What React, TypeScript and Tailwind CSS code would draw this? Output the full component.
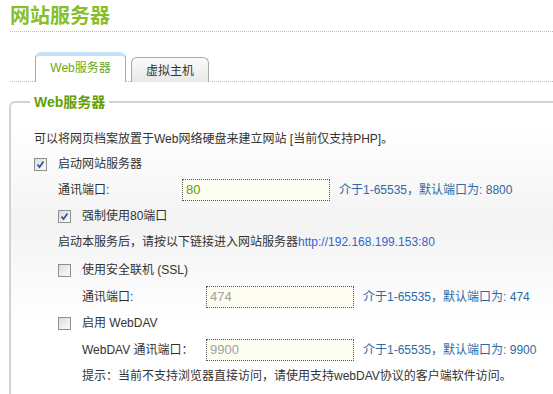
import React from "react";

const font = "font-['Liberation_Sans','Noto_Sans_CJK_SC',sans-serif]";

function Check({ checked }: { checked?: boolean }) {
  return (
    <span className="flex h-[13px] w-[13px] shrink-0 items-center justify-center border border-[#8e8f8f] bg-[linear-gradient(135deg,#dcdcd6,#fbfbfb)]">
      {checked && (
        <svg width="9" height="9" viewBox="0 0 9 9" aria-hidden="true">
          <path d="M1.5 4.5L3.5 7L7.5 1.5" fill="none" stroke="#2f4fa8" strokeWidth="1.7" />
        </svg>
      )}
    </span>
  );
}

function PortRow({
  label,
  value,
  hint,
  active,
  indent,
  h,
}: {
  label: string;
  value: string;
  hint: string;
  active?: boolean;
  indent: string;
  h: string;
}) {
  return (
    <div className={`flex items-center ${indent} ${h}`}>
      <span className="w-[124px] shrink-0">{label}</span>
      <div
        className={`flex h-[22px] w-[148px] items-center border border-dotted border-[#555] bg-[#fdfdf2] pl-[3px] text-[13px] ${
          active ? "text-[#5b9f00]" : "text-[#a0a0a0]"
        }`}
      >
        {value}
      </div>
      <span className="ml-[9px] text-[#2d6aa5]">{hint}</span>
    </div>
  );
}

export default function App() {
  return (
    <div className={`h-[394px] w-[553px] overflow-hidden bg-white text-[12px] text-[#333] ${font}`}>
      {/* page title */}
      <div className="ml-[10px] h-[32px] border-b border-dotted border-[#bdbdbd] pt-[4px]">
        <h1 className="text-[20px] font-bold leading-[24px] text-[#86bf2b]">网站服务器</h1>
      </div>

      {/* tabs */}
      <div className="ml-[10px] mt-[20px] flex h-[30px] items-end border-b border-dotted border-[#bdbdbd] pl-[25px]">
        <div className="relative -mb-px flex h-[30px] w-[91px] items-center justify-center rounded-t-[6px] border border-b-0 border-[#a9a9a9] border-t-[4px] border-t-[#c4e2f8] bg-white pb-[2px] text-[#6aa81a]">
          Web服务器
        </div>
        <div className="relative -mb-px ml-[5px] flex h-[25px] w-[78px] items-center justify-center rounded-t-[6px] border border-b-0 border-[#a9a9a9] bg-[linear-gradient(#fbfbfb,#e8e8e8)] pt-[2px] text-[#333]">
          虚拟主机
        </div>
      </div>

      {/* settings group */}
      <fieldset className="ml-[9px] mt-[12px] rounded-tl-[6px] border-l-2 border-t-2 border-[#d2d2d2] bg-[linear-gradient(to_bottom,#fff_8%,#f3f3f3_40%,#fff_72%)] pl-[19px] pb-[20px] pt-[16px]">
        <legend className="px-[4px] text-[14px] font-bold leading-[16px] text-[#5fa006]">Web服务器</legend>

        <div className="pl-[4px]">
          <div className="flex h-[26px] items-center">
            可以将网页档案放置于Web网络硬盘来建立网站 [当前仅支持PHP]。
          </div>
          <div className="flex h-[24px] items-center gap-[11px]">
            <Check checked />
            <span>启动网站服务器</span>
          </div>
          <PortRow label="通讯端口:" value="80" hint="介于1-65535，默认端口为: 8800" active indent="pl-[24px]" h="h-[28px]" />
          <div className="flex h-[24px] items-center gap-[11px] pl-[24px]">
            <Check checked />
            <span>强制使用80端口</span>
          </div>
          <div className="flex h-[28px] items-center pl-[24px]">
            启动本服务后，请按以下链接进入网站服务器
            <span className="text-[#3366cc]">http://192.168.199.153:80</span>
          </div>
          <div className="flex h-[28px] items-center gap-[11px] pl-[24px]">
            <Check />
            <span>使用安全联机 (SSL)</span>
          </div>
          <PortRow label="通讯端口:" value="474" hint="介于1-65535，默认端口为: 474" indent="pl-[48px]" h="h-[26px]" />
          <div className="flex h-[26px] items-center gap-[11px] pl-[24px]">
            <Check />
            <span>启用 WebDAV</span>
          </div>
          <PortRow label="WebDAV 通讯端口：" value="9900" hint="介于1-65535，默认端口为: 9900" indent="pl-[48px]" h="h-[28px]" />
          <div className="flex h-[24px] items-center pl-[48px]">
            提示：当前不支持浏览器直接访问，请使用支持webDAV协议的客户端软件访问。
          </div>
        </div>
      </fieldset>
    </div>
  );
}
